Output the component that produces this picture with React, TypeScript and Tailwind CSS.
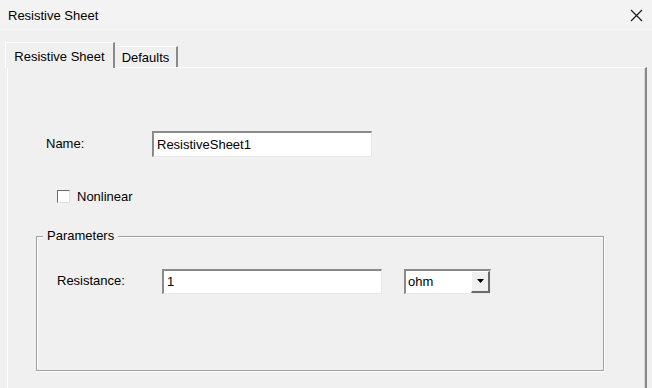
import React from 'react';

function SunkenInput({ value, className }: { value: string; className: string }) {
  return (
    <div
      className={`bg-white border-t-2 border-l-2 border-t-[#8a8a8a] border-l-[#8a8a8a] border-b border-r border-b-[#e8e8e8] border-r-[#e8e8e8] flex items-center pl-[3px] text-[13px] text-black ${className}`}
    >
      {value}
    </div>
  );
}

export default function App() {
  return (
    <div
      className="w-[652px] h-[388px] bg-[#f0f0f0] overflow-hidden flex flex-col text-black"
      style={{ fontFamily: '"Liberation Sans", Arial, sans-serif' }}
    >
      {/* Title bar */}
      <div className="h-[31px] shrink-0 bg-[#f3f3f3] flex items-center justify-between pl-[8px] pr-[9px]">
        <span className="text-[13px]">Resistive Sheet</span>
        <svg width="13" height="13" viewBox="0 0 13 13">
          <path d="M1 1 L12 12 M12 1 L1 12" stroke="#1a1a1a" strokeWidth="1.2" />
        </svg>
      </div>

      {/* Tabs */}
      <div className="flex items-end pl-[5px] pt-[11px] shrink-0">
        <div className="w-[110px] h-[26px] border-t border-l border-t-white border-l-white border-r-2 border-r-[#8a8a8a] flex items-start justify-center pt-[4px] text-[13px] relative z-10 -mb-px bg-[#f0f0f0]">
          Resistive Sheet
        </div>
        <div className="w-[63px] h-[21px] border-t border-t-white border-r-2 border-r-[#8a8a8a] flex items-center justify-center pt-[1px] text-[13px]">
          Defaults
        </div>
      </div>

      {/* Tab panel */}
      <div className="ml-[7px] w-[640px] flex-1 border-t border-l border-t-white border-l-white border-r-2 border-r-[#8a8a8a] shadow-[inset_-1px_0_0_#d8d8d8] pt-[63px]">
        <div className="flex items-center pl-[38px]">
          <span className="w-[106px] text-[13px]">Name:</span>
          <SunkenInput value="ResistiveSheet1" className="w-[220px] h-[26px]" />
        </div>

        <div className="flex items-center pl-[49px] mt-[30px]">
          <div className="w-[13px] h-[13px] bg-white border border-t-[#6a6a6a] border-l-[#6a6a6a] border-b-[#e0e0e0] border-r-[#e0e0e0]" />
          <span className="ml-[7px] text-[13px]">Nonlinear</span>
        </div>

        <div className="relative ml-[28px] mt-[29px] w-[568px] h-[135px] border border-[#a0a0a0] shadow-[inset_1px_1px_0_#fff,1px_1px_0_#fff]">
          <span className="absolute -top-[9px] left-[6px] px-[4px] bg-[#f0f0f0] text-[13px] leading-[16px]">Parameters</span>
          <div className="flex items-center pl-[20px] pt-[32px]">
            <span className="w-[105px] text-[13px]">Resistance:</span>
            <SunkenInput value="1" className="w-[220px] h-[25px]" />
            <div className="ml-[22px] w-[87px] h-[25px] bg-white border-t-2 border-l-2 border-t-[#8a8a8a] border-l-[#8a8a8a] border-b border-r border-b-[#e8e8e8] border-r-[#e8e8e8] flex items-stretch">
              <span className="flex-1 flex items-center pl-[2px] text-[13px]">ohm</span>
              <div className="w-[19px] bg-[#f0f0f0] border-t border-l border-t-white border-l-white border-b-2 border-r-2 border-b-[#6a6a6a] border-r-[#6a6a6a] flex items-center justify-center">
                <svg width="7" height="4" viewBox="0 0 7 4">
                  <path d="M0 0 H7 L3.5 4 Z" fill="#000" />
                </svg>
              </div>
            </div>
          </div>
        </div>
      </div>
    </div>
  );
}
